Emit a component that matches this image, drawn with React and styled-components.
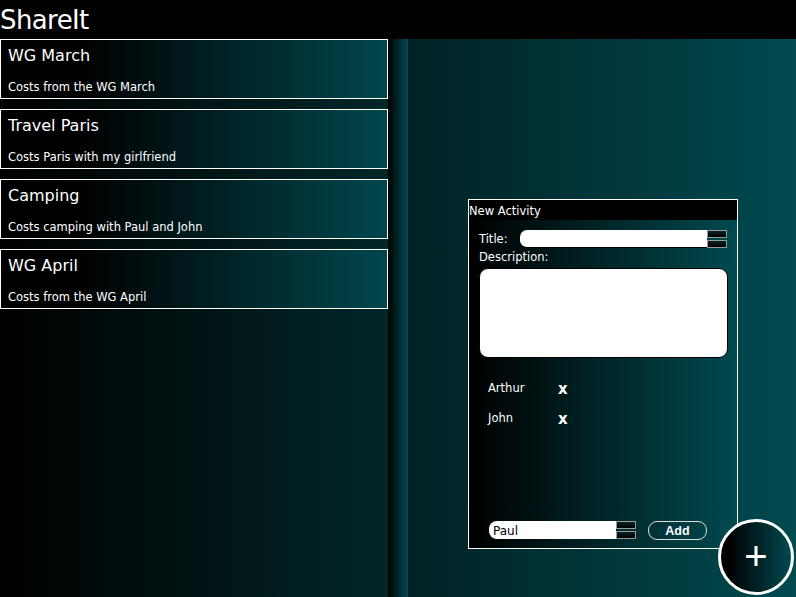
import React from 'react'
import styled, { createGlobalStyle } from 'styled-components'

const GlobalStyle = createGlobalStyle`
  html, body { margin: 0; padding: 0; background: #000; }
  body { font-family: "DejaVu Sans", "Liberation Sans", sans-serif; color: #fff; }
`

const groups = [
  { title: 'WG March', text: 'Costs from the WG March' },
  { title: 'Travel Paris', text: 'Costs Paris with my girlfriend' },
  { title: 'Camping', text: 'Costs camping with Paul and John' },
  { title: 'WG April', text: 'Costs from the WG April' },
]

const members = ['Arthur', 'John']

function Spinner() {
  return (
    <SpinBox>
      <SpinPart />
      <SpinPart />
    </SpinBox>
  )
}

function App() {
  return (
    <Page>
      <GlobalStyle />
      <Header>ShareIt</Header>
      <Main>
        <GroupList>
          {groups.map(g => (
            <GroupCard key={g.title}>
              <GroupTitle>{g.title}</GroupTitle>
              <GroupText>{g.text}</GroupText>
            </GroupCard>
          ))}
        </GroupList>
        <Splitter />
        <Detail>
          <Dialog>
            <DialogHead>New Activity</DialogHead>
            <DialogBody>
              <TitleRow>
                <Label>Title:</Label>
                <TextInput />
                <Spinner />
              </TitleRow>
              <Label>Description:</Label>
              <TextArea />
              <Members>
                {members.map(m => (
                  <MemberRow key={m}>
                    <MemberName>{m}</MemberName>
                    <Remove>x</Remove>
                  </MemberRow>
                ))}
              </Members>
              <AddRow>
                <SmallInput>Paul</SmallInput>
                <Spinner />
                <AddButton>Add</AddButton>
              </AddRow>
            </DialogBody>
          </Dialog>
          <Fab>+</Fab>
        </Detail>
      </Main>
    </Page>
  )
}

export default App

const Page = styled.div`
  width: 796px;
  height: 597px;
  display: flex;
  flex-direction: column;
  overflow: hidden;
`
const Header = styled.div`
  height: 39px;
  background: #000;
  font-size: 26px;
  line-height: 38px;
  padding-top: 1px;
  box-sizing: border-box;
  letter-spacing: -0.6px;
`
const Main = styled.div`
  flex: 1;
  display: flex;
`
const GroupList = styled.div`
  width: 388px;
  display: flex;
  flex-direction: column;
  gap: 10px;
  background: linear-gradient(to right, #000 0%, #012628 100%);
`
const GroupCard = styled.div`
  height: 58px;
  border: 1px solid #fff;
  background: linear-gradient(to right, #000 20%, #00474d 100%);
  padding: 0 0 0 7px;
  box-sizing: content-box;
  width: 379px;
`
const GroupTitle = styled.div`
  font-size: 16px;
  margin-top: 6px;
  height: 28px;
`
const GroupText = styled.div`
  font-size: 11.5px;
  margin-top: 6px;
`
const Splitter = styled.div`
  width: 20px;
  background: linear-gradient(to right, #000 0%, #004a50 100%);
`
const Detail = styled.div`
  flex: 1;
  position: relative;
  background: linear-gradient(to right, #012224 0%, #004a50 100%);
`
const Dialog = styled.div`
  position: absolute;
  left: 60px;
  top: 160px;
  width: 268px;
  height: 348px;
  border: 1px solid #fff;
  display: flex;
  flex-direction: column;
`
const DialogHead = styled.div`
  height: 20px;
  background: #000;
  font-size: 11.5px;
  line-height: 22px;
  padding-left: 0;
`
const DialogBody = styled.div`
  flex: 1;
  background: linear-gradient(to right, #000 0%, #004a50 100%);
  padding: 10px 10px 8px 10px;
  display: flex;
  flex-direction: column;
`
const TitleRow = styled.div`
  display: flex;
  align-items: center;
  height: 18px;
`
const Label = styled.div`
  font-size: 11.5px;
  width: 41px;
  line-height: 18px;
  white-space: nowrap;
`
const TextInput = styled.div`
  width: 187px;
  height: 17px;
  background: #fff;
  border-radius: 7px 0 0 7px;
  border-bottom: 1px solid #000;
`
const SpinBox = styled.div`
  width: 20px;
  height: 18px;
  display: flex;
  flex-direction: column;
  gap: 2px;
`
const SpinPart = styled.div`
  flex: 1;
  border: 1px solid #9a9a9a;
  background: linear-gradient(to bottom, #0b2426, #000);
`
const TextArea = styled.div`
  margin-top: 2px;
  height: 88px;
  width: 247px;
  background: #fff;
  border: 1px solid #000;
  border-radius: 9px;
`
const Members = styled.div`
  flex: 1;
  padding: 21px 0 0 9px;
  display: flex;
  flex-direction: column;
  gap: 12px;
`
const MemberRow = styled.div`
  display: flex;
  align-items: center;
  height: 18px;
`
const MemberName = styled.div`
  width: 70px;
  font-size: 11.5px;
`
const Remove = styled.div`
  font-size: 15px;
  font-weight: bold;
  margin-top: 2px;
`
const AddRow = styled.div`
  display: flex;
  align-items: center;
  padding-left: 10px;
  height: 20px;
`
const SmallInput = styled.div`
  width: 123px;
  height: 18px;
  background: #fff;
  color: #000;
  border-radius: 8px 0 0 8px;
  font-size: 12px;
  line-height: 20px;
  padding-left: 4px;
`
const AddButton = styled.div`
  margin-left: 12px;
  width: 57px;
  height: 17px;
  border: 1px solid #ddd;
  border-radius: 9px;
  font-weight: bold;
  font-size: 12.5px;
  line-height: 18px;
  text-align: center;
  font-family: "Liberation Sans", sans-serif;
`
const Fab = styled.div`
  position: absolute;
  left: 310px;
  top: 480px;
  width: 70px;
  height: 70px;
  border: 3px solid #fff;
  border-radius: 50%;
  background: linear-gradient(to right, #000 10%, #004a50 100%);
  font-size: 40px;
  line-height: 68px;
  text-align: center;
  font-family: "Liberation Sans", sans-serif;
`
